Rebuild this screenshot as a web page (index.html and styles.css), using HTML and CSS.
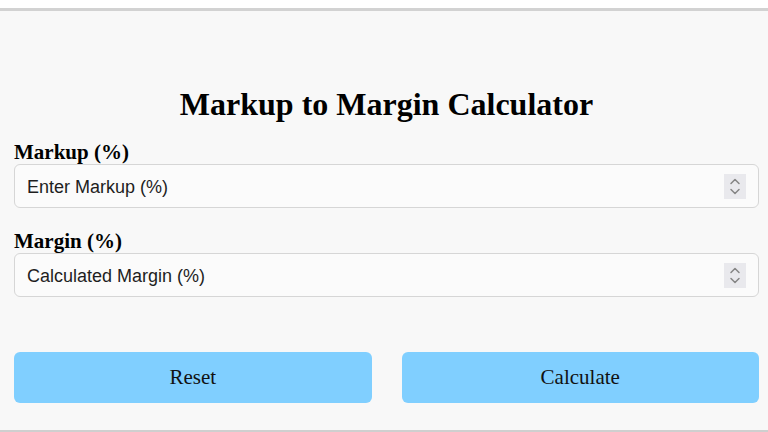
FILE: index.html
```html
<!DOCTYPE html>
<html lang="en">
<head>
  <meta charset="UTF-8">
  <meta name="viewport" content="width=device-width, initial-scale=1.0">
  <title>Markup to Margin Calculator</title>
  <link rel="stylesheet" href="styles.css">
</head>
<body>

  <div class="calculator">
    <h1>Markup to Margin Calculator</h1>

    <label for="markup" class="field-label">Markup (%)</label>
    <div class="field-wrap">
      <input type="number" id="markup" class="field-input" placeholder="Enter Markup (%)">
      <svg class="spinner" width="22" height="25" viewBox="0 0 22 25" aria-hidden="true">
        <rect width="22" height="25" fill="#e9e9ed"/>
        <path d="M7 9.5l4-4 4 4" fill="none" stroke="#858585" stroke-width="1.5" stroke-linecap="round" stroke-linejoin="round"/>
        <path d="M7 15.5l4 4 4-4" fill="none" stroke="#858585" stroke-width="1.5" stroke-linecap="round" stroke-linejoin="round"/>
      </svg>
    </div>

    <label for="margin" class="field-label">Margin (%)</label>
    <div class="field-wrap">
      <input type="number" id="margin" class="field-input" placeholder="Calculated Margin (%)" readonly>
      <svg class="spinner" width="22" height="25" viewBox="0 0 22 25" aria-hidden="true">
        <rect width="22" height="25" fill="#e9e9ed"/>
        <path d="M7 9.5l4-4 4 4" fill="none" stroke="#858585" stroke-width="1.5" stroke-linecap="round" stroke-linejoin="round"/>
        <path d="M7 15.5l4 4 4-4" fill="none" stroke="#858585" stroke-width="1.5" stroke-linecap="round" stroke-linejoin="round"/>
      </svg>
    </div>

    <div class="button-row">
      <button class="btn" onclick="resetFields()">Reset</button>
      <button class="btn" onclick="calculateMargin()">Calculate</button>
    </div>
  </div>

  <script>
    function calculateMargin() {
      var markup = parseFloat(document.getElementById('markup').value);
      var margin = document.getElementById('margin');

      if (isNaN(markup)) {
        margin.value = '';
        return;
      }
      // margin = markup / (100 + markup) * 100
      margin.value = (markup / (100 + markup) * 100).toFixed(2);
    }

    function resetFields() {
      document.getElementById('markup').value = '';
      document.getElementById('margin').value = '';
    }
  </script>

</body>
</html>
```

FILE: styles.css
```css
body {
  margin: 0;
  padding-top: 8px;
  background-color: #fff;
  font-family: 'Liberation Serif', serif;
  color: #000;
}
.calculator {
  background-color: #f8f8f8;
  border-top: 3px solid #d2d2d2;
  border-bottom: 2px solid #cfcfcf;
  padding: 0 9px 27px 14px;
}
h1 {
  margin: 75px 0 18px;
  font-size: 32px;
  line-height: 37px;
  text-align: center;
}
.field-label {
  display: block;
  font-size: 21px;
  font-weight: bold;
  line-height: 23px;
}
.field-wrap {
  position: relative;
  margin-bottom: 22px;
}
.field-input {
  display: block;
  width: 100%;
  height: 44px;
  box-sizing: border-box;
  margin: 0;
  padding: 2px 40px 0 12px;
  font-family: 'Liberation Sans', sans-serif;
  font-size: 18px;
  color: #222;
  background-color: #fbfbfb;
  border: 1px solid #d6d6d6;
  border-radius: 6px;
  outline: none;
  -moz-appearance: textfield;
}
.field-input::placeholder {
  color: #1e1e1e;
}
.field-input::-webkit-inner-spin-button,
.field-input::-webkit-outer-spin-button {
  -webkit-appearance: none;
  margin: 0;
}
.spinner {
  position: absolute;
  top: 10px;
  right: 13px;
  pointer-events: none;
}
.button-row {
  display: flex;
  gap: 30px;
  margin-top: 55px;
}
.btn {
  flex: 1;
  height: 51px;
  font-family: 'Liberation Serif', serif;
  font-size: 21px;
  color: #111;
  background-color: #80cfff;
  border: none;
  border-radius: 6px;
  cursor: pointer;
}
.btn:hover {
  background-color: #6cc4fb;
}
```
